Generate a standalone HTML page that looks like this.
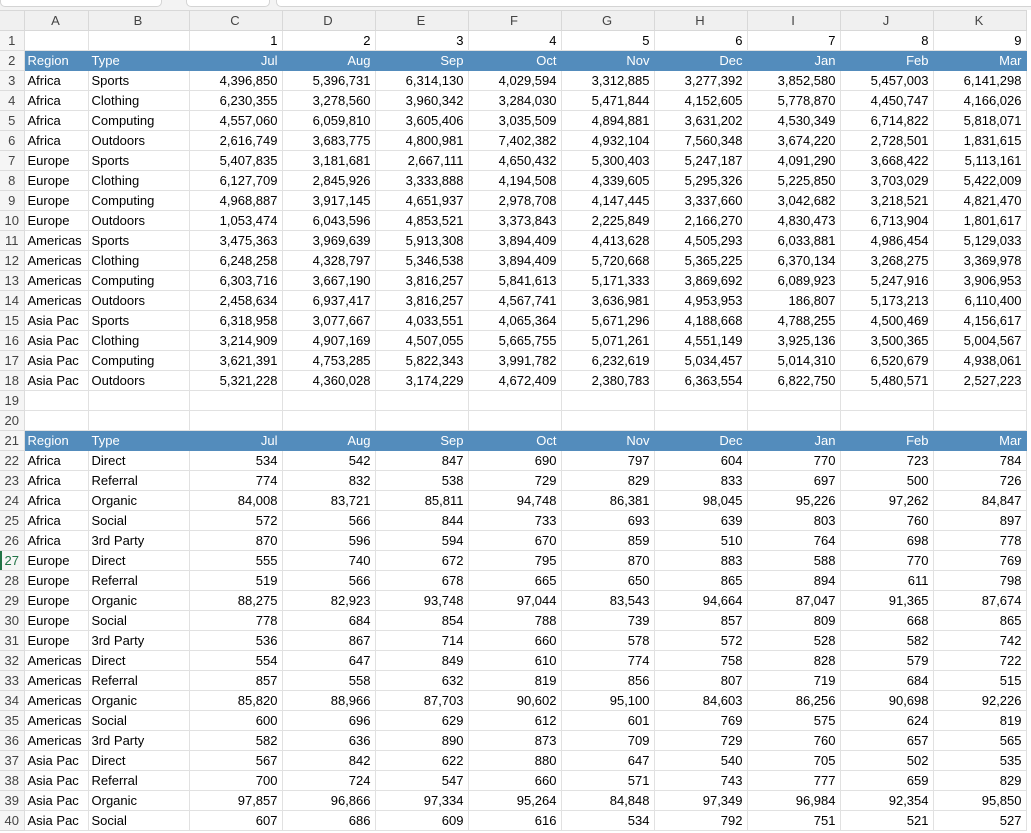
<!DOCTYPE html>
<html><head><meta charset="utf-8"><style>
body{margin:0;width:1031px;height:833px;overflow:hidden;background:#fff;font-family:"Liberation Sans",sans-serif;font-size:13px;color:#000}
.top{height:10px;background:#f3f3f3;position:relative}
.top div{position:absolute;top:-6px;height:11px;border:1px solid #d4d4d4;border-radius:5px;background:#fff}
table{border-collapse:collapse;table-layout:fixed;position:absolute;top:10px;left:0}
td{height:18px;padding:1px 4px 0 3px;border:1px solid #e1e1e1;white-space:nowrap;overflow:hidden;text-align:right;line-height:18px}
tr.h td{background:#f0f0f0;text-align:center;color:#444;border-color:#d8d8d8}
td.rh{background:#f5f5f5;text-align:center;color:#444;padding:1px 0 0;border-color:#dcdcdc;border-left:none}
td.l{text-align:left}
tr.b td:not(.rh){background:#538cbc;color:#fff;border-color:#538cbc}
tr.sel td.rh{box-shadow:inset 2px 0 #217346;color:#217346}
</style></head><body>
<div class="top"><div style="left:0;width:160px"></div><div style="left:186px;width:82px"></div><div style="left:276px;width:760px"></div></div>
<table>
<colgroup><col style="width:24px"><col style="width:64px"><col style="width:101px"><col span="9" style="width:93px"></colgroup>
<tr class="h"><td style="border-left:none"></td><td>A</td><td>B</td><td>C</td><td>D</td><td>E</td><td>F</td><td>G</td><td>H</td><td>I</td><td>J</td><td>K</td></tr>
<tr><td class="rh">1</td><td></td><td></td><td>1</td><td>2</td><td>3</td><td>4</td><td>5</td><td>6</td><td>7</td><td>8</td><td>9</td></tr>
<tr class="b"><td class="rh">2</td><td class="l">Region</td><td class="l">Type</td><td>Jul</td><td>Aug</td><td>Sep</td><td>Oct</td><td>Nov</td><td>Dec</td><td>Jan</td><td>Feb</td><td>Mar</td></tr>
<tr><td class="rh">3</td><td class="l">Africa</td><td class="l">Sports</td><td>4,396,850</td><td>5,396,731</td><td>6,314,130</td><td>4,029,594</td><td>3,312,885</td><td>3,277,392</td><td>3,852,580</td><td>5,457,003</td><td>6,141,298</td></tr>
<tr><td class="rh">4</td><td class="l">Africa</td><td class="l">Clothing</td><td>6,230,355</td><td>3,278,560</td><td>3,960,342</td><td>3,284,030</td><td>5,471,844</td><td>4,152,605</td><td>5,778,870</td><td>4,450,747</td><td>4,166,026</td></tr>
<tr><td class="rh">5</td><td class="l">Africa</td><td class="l">Computing</td><td>4,557,060</td><td>6,059,810</td><td>3,605,406</td><td>3,035,509</td><td>4,894,881</td><td>3,631,202</td><td>4,530,349</td><td>6,714,822</td><td>5,818,071</td></tr>
<tr><td class="rh">6</td><td class="l">Africa</td><td class="l">Outdoors</td><td>2,616,749</td><td>3,683,775</td><td>4,800,981</td><td>7,402,382</td><td>4,932,104</td><td>7,560,348</td><td>3,674,220</td><td>2,728,501</td><td>1,831,615</td></tr>
<tr><td class="rh">7</td><td class="l">Europe</td><td class="l">Sports</td><td>5,407,835</td><td>3,181,681</td><td>2,667,111</td><td>4,650,432</td><td>5,300,403</td><td>5,247,187</td><td>4,091,290</td><td>3,668,422</td><td>5,113,161</td></tr>
<tr><td class="rh">8</td><td class="l">Europe</td><td class="l">Clothing</td><td>6,127,709</td><td>2,845,926</td><td>3,333,888</td><td>4,194,508</td><td>4,339,605</td><td>5,295,326</td><td>5,225,850</td><td>3,703,029</td><td>5,422,009</td></tr>
<tr><td class="rh">9</td><td class="l">Europe</td><td class="l">Computing</td><td>4,968,887</td><td>3,917,145</td><td>4,651,937</td><td>2,978,708</td><td>4,147,445</td><td>3,337,660</td><td>3,042,682</td><td>3,218,521</td><td>4,821,470</td></tr>
<tr><td class="rh">10</td><td class="l">Europe</td><td class="l">Outdoors</td><td>1,053,474</td><td>6,043,596</td><td>4,853,521</td><td>3,373,843</td><td>2,225,849</td><td>2,166,270</td><td>4,830,473</td><td>6,713,904</td><td>1,801,617</td></tr>
<tr><td class="rh">11</td><td class="l">Americas</td><td class="l">Sports</td><td>3,475,363</td><td>3,969,639</td><td>5,913,308</td><td>3,894,409</td><td>4,413,628</td><td>4,505,293</td><td>6,033,881</td><td>4,986,454</td><td>5,129,033</td></tr>
<tr><td class="rh">12</td><td class="l">Americas</td><td class="l">Clothing</td><td>6,248,258</td><td>4,328,797</td><td>5,346,538</td><td>3,894,409</td><td>5,720,668</td><td>5,365,225</td><td>6,370,134</td><td>3,268,275</td><td>3,369,978</td></tr>
<tr><td class="rh">13</td><td class="l">Americas</td><td class="l">Computing</td><td>6,303,716</td><td>3,667,190</td><td>3,816,257</td><td>5,841,613</td><td>5,171,333</td><td>3,869,692</td><td>6,089,923</td><td>5,247,916</td><td>3,906,953</td></tr>
<tr><td class="rh">14</td><td class="l">Americas</td><td class="l">Outdoors</td><td>2,458,634</td><td>6,937,417</td><td>3,816,257</td><td>4,567,741</td><td>3,636,981</td><td>4,953,953</td><td>186,807</td><td>5,173,213</td><td>6,110,400</td></tr>
<tr><td class="rh">15</td><td class="l">Asia Pac</td><td class="l">Sports</td><td>6,318,958</td><td>3,077,667</td><td>4,033,551</td><td>4,065,364</td><td>5,671,296</td><td>4,188,668</td><td>4,788,255</td><td>4,500,469</td><td>4,156,617</td></tr>
<tr><td class="rh">16</td><td class="l">Asia Pac</td><td class="l">Clothing</td><td>3,214,909</td><td>4,907,169</td><td>4,507,055</td><td>5,665,755</td><td>5,071,261</td><td>4,551,149</td><td>3,925,136</td><td>3,500,365</td><td>5,004,567</td></tr>
<tr><td class="rh">17</td><td class="l">Asia Pac</td><td class="l">Computing</td><td>3,621,391</td><td>4,753,285</td><td>5,822,343</td><td>3,991,782</td><td>6,232,619</td><td>5,034,457</td><td>5,014,310</td><td>6,520,679</td><td>4,938,061</td></tr>
<tr><td class="rh">18</td><td class="l">Asia Pac</td><td class="l">Outdoors</td><td>5,321,228</td><td>4,360,028</td><td>3,174,229</td><td>4,672,409</td><td>2,380,783</td><td>6,363,554</td><td>6,822,750</td><td>5,480,571</td><td>2,527,223</td></tr>
<tr><td class="rh">19</td><td></td><td></td><td></td><td></td><td></td><td></td><td></td><td></td><td></td><td></td><td></td></tr>
<tr><td class="rh">20</td><td></td><td></td><td></td><td></td><td></td><td></td><td></td><td></td><td></td><td></td><td></td></tr>
<tr class="b"><td class="rh">21</td><td class="l">Region</td><td class="l">Type</td><td>Jul</td><td>Aug</td><td>Sep</td><td>Oct</td><td>Nov</td><td>Dec</td><td>Jan</td><td>Feb</td><td>Mar</td></tr>
<tr><td class="rh">22</td><td class="l">Africa</td><td class="l">Direct</td><td>534</td><td>542</td><td>847</td><td>690</td><td>797</td><td>604</td><td>770</td><td>723</td><td>784</td></tr>
<tr><td class="rh">23</td><td class="l">Africa</td><td class="l">Referral</td><td>774</td><td>832</td><td>538</td><td>729</td><td>829</td><td>833</td><td>697</td><td>500</td><td>726</td></tr>
<tr><td class="rh">24</td><td class="l">Africa</td><td class="l">Organic</td><td>84,008</td><td>83,721</td><td>85,811</td><td>94,748</td><td>86,381</td><td>98,045</td><td>95,226</td><td>97,262</td><td>84,847</td></tr>
<tr><td class="rh">25</td><td class="l">Africa</td><td class="l">Social</td><td>572</td><td>566</td><td>844</td><td>733</td><td>693</td><td>639</td><td>803</td><td>760</td><td>897</td></tr>
<tr><td class="rh">26</td><td class="l">Africa</td><td class="l">3rd Party</td><td>870</td><td>596</td><td>594</td><td>670</td><td>859</td><td>510</td><td>764</td><td>698</td><td>778</td></tr>
<tr class="sel"><td class="rh">27</td><td class="l">Europe</td><td class="l">Direct</td><td>555</td><td>740</td><td>672</td><td>795</td><td>870</td><td>883</td><td>588</td><td>770</td><td>769</td></tr>
<tr><td class="rh">28</td><td class="l">Europe</td><td class="l">Referral</td><td>519</td><td>566</td><td>678</td><td>665</td><td>650</td><td>865</td><td>894</td><td>611</td><td>798</td></tr>
<tr><td class="rh">29</td><td class="l">Europe</td><td class="l">Organic</td><td>88,275</td><td>82,923</td><td>93,748</td><td>97,044</td><td>83,543</td><td>94,664</td><td>87,047</td><td>91,365</td><td>87,674</td></tr>
<tr><td class="rh">30</td><td class="l">Europe</td><td class="l">Social</td><td>778</td><td>684</td><td>854</td><td>788</td><td>739</td><td>857</td><td>809</td><td>668</td><td>865</td></tr>
<tr><td class="rh">31</td><td class="l">Europe</td><td class="l">3rd Party</td><td>536</td><td>867</td><td>714</td><td>660</td><td>578</td><td>572</td><td>528</td><td>582</td><td>742</td></tr>
<tr><td class="rh">32</td><td class="l">Americas</td><td class="l">Direct</td><td>554</td><td>647</td><td>849</td><td>610</td><td>774</td><td>758</td><td>828</td><td>579</td><td>722</td></tr>
<tr><td class="rh">33</td><td class="l">Americas</td><td class="l">Referral</td><td>857</td><td>558</td><td>632</td><td>819</td><td>856</td><td>807</td><td>719</td><td>684</td><td>515</td></tr>
<tr><td class="rh">34</td><td class="l">Americas</td><td class="l">Organic</td><td>85,820</td><td>88,966</td><td>87,703</td><td>90,602</td><td>95,100</td><td>84,603</td><td>86,256</td><td>90,698</td><td>92,226</td></tr>
<tr><td class="rh">35</td><td class="l">Americas</td><td class="l">Social</td><td>600</td><td>696</td><td>629</td><td>612</td><td>601</td><td>769</td><td>575</td><td>624</td><td>819</td></tr>
<tr><td class="rh">36</td><td class="l">Americas</td><td class="l">3rd Party</td><td>582</td><td>636</td><td>890</td><td>873</td><td>709</td><td>729</td><td>760</td><td>657</td><td>565</td></tr>
<tr><td class="rh">37</td><td class="l">Asia Pac</td><td class="l">Direct</td><td>567</td><td>842</td><td>622</td><td>880</td><td>647</td><td>540</td><td>705</td><td>502</td><td>535</td></tr>
<tr><td class="rh">38</td><td class="l">Asia Pac</td><td class="l">Referral</td><td>700</td><td>724</td><td>547</td><td>660</td><td>571</td><td>743</td><td>777</td><td>659</td><td>829</td></tr>
<tr><td class="rh">39</td><td class="l">Asia Pac</td><td class="l">Organic</td><td>97,857</td><td>96,866</td><td>97,334</td><td>95,264</td><td>84,848</td><td>97,349</td><td>96,984</td><td>92,354</td><td>95,850</td></tr>
<tr><td class="rh">40</td><td class="l">Asia Pac</td><td class="l">Social</td><td>607</td><td>686</td><td>609</td><td>616</td><td>534</td><td>792</td><td>751</td><td>521</td><td>527</td></tr>
</table>
</body></html>
